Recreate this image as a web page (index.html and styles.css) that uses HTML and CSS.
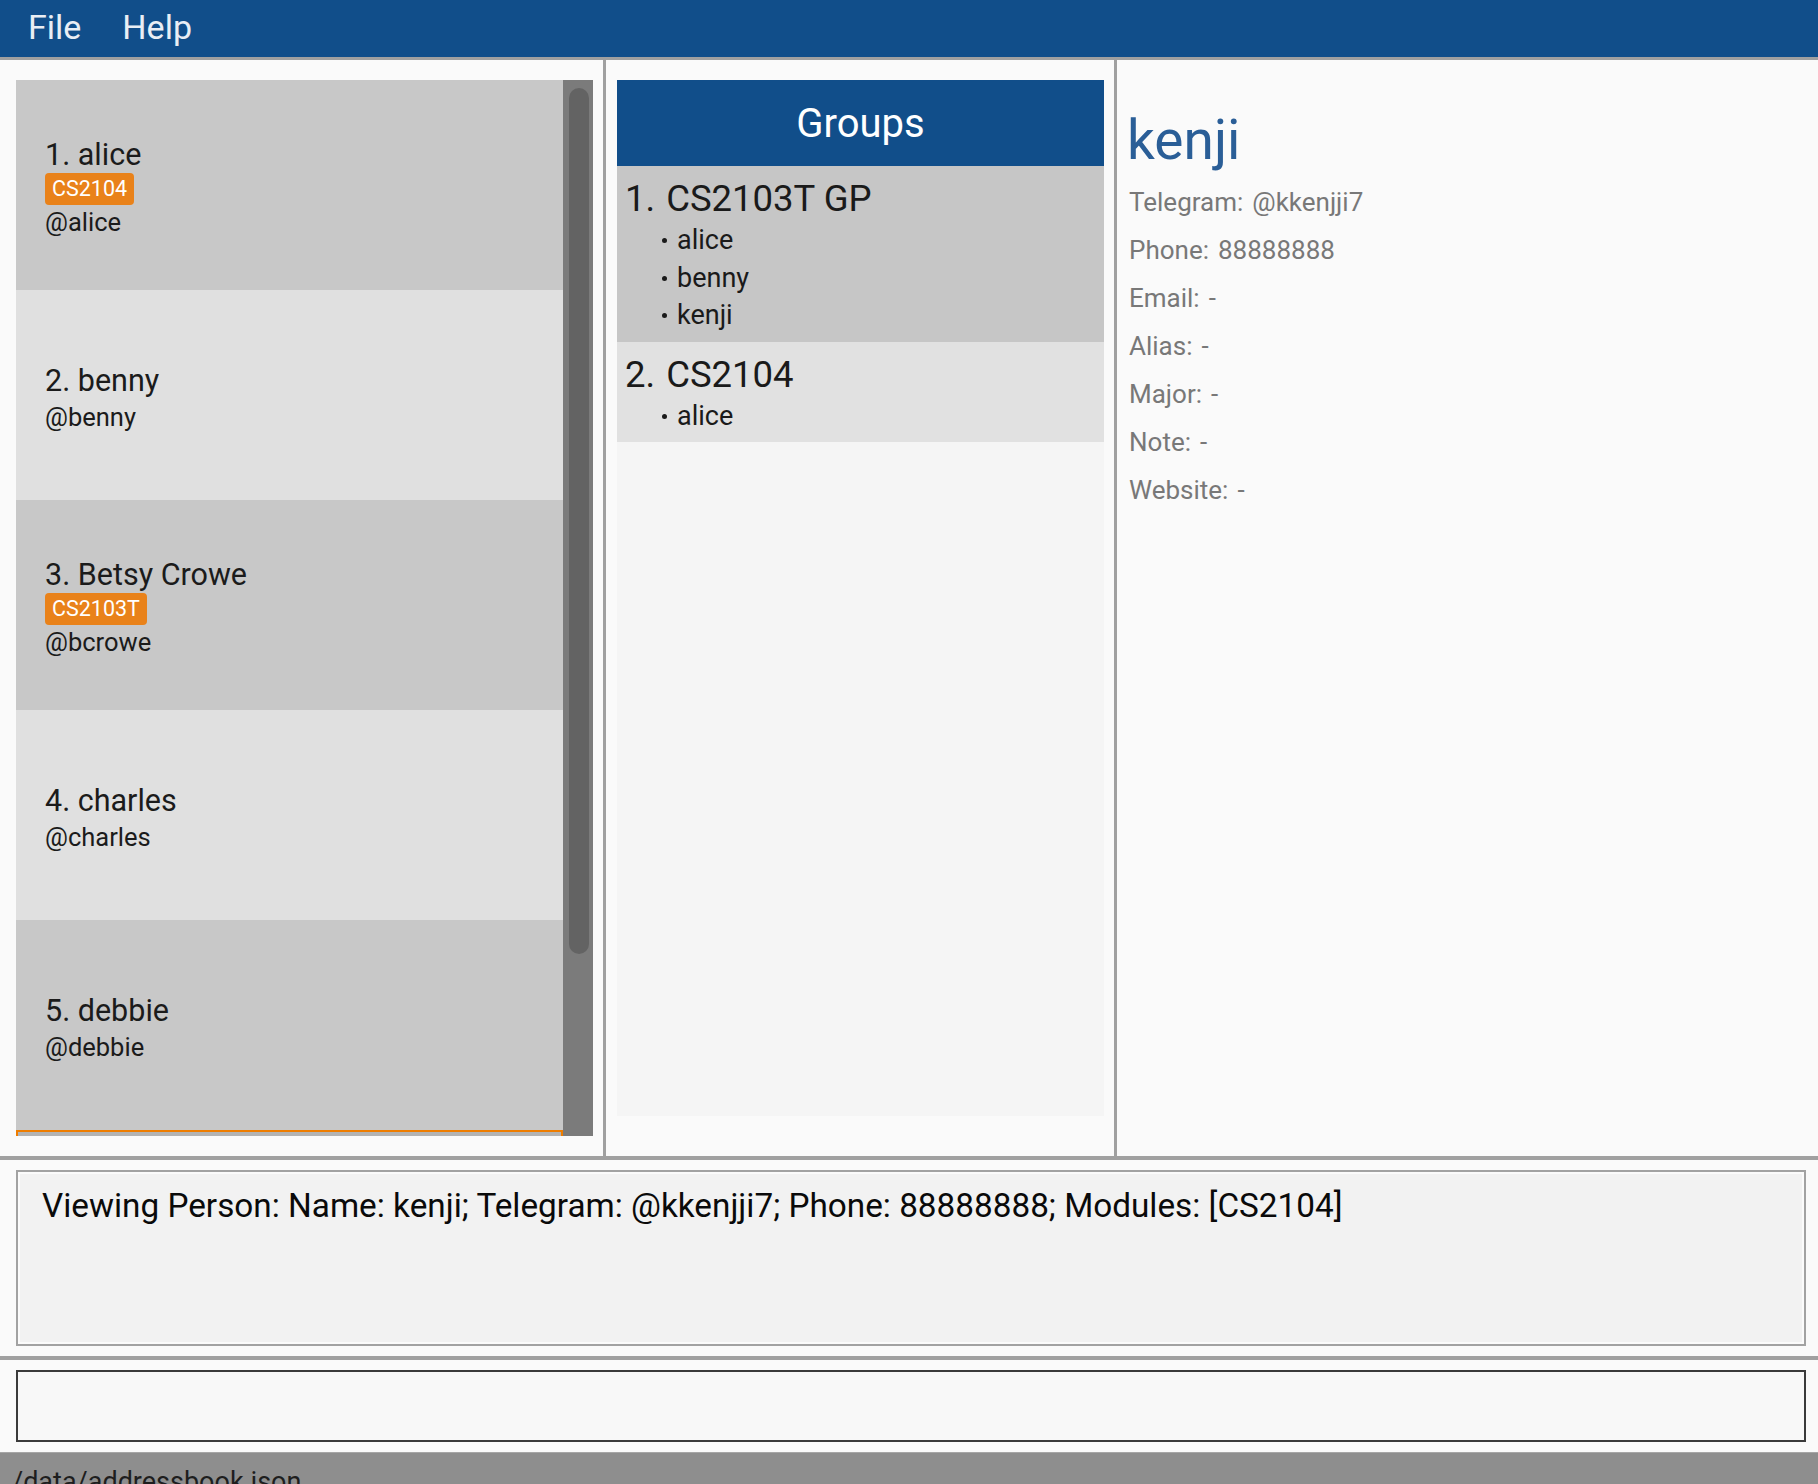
FILE: index.html
```html
<!DOCTYPE html>
<html lang="en">
<head>
<meta charset="utf-8">
<title>Address Book</title>
<link rel="stylesheet" href="styles.css">
</head>
<body>
<div class="app">
  <header class="menubar">
    <span class="menu-item">File</span>
    <span class="menu-item">Help</span>
  </header>

  <main class="main">
    <section class="panel panel-left">
      <div class="list-view">
        <div class="cards">
          <div class="card card-odd">
            <div class="card-name">1. alice</div>
            <div class="tags"><span class="tag">CS2104</span></div>
            <div class="card-handle tight">@alice</div>
          </div>
          <div class="card card-even">
            <div class="card-name">2. benny</div>
            <div class="card-handle">@benny</div>
          </div>
          <div class="card card-odd">
            <div class="card-name">3. Betsy Crowe</div>
            <div class="tags"><span class="tag">CS2103T</span></div>
            <div class="card-handle tight">@bcrowe</div>
          </div>
          <div class="card card-even">
            <div class="card-name">4. charles</div>
            <div class="card-handle">@charles</div>
          </div>
          <div class="card card-odd">
            <div class="card-name">5. debbie</div>
            <div class="card-handle">@debbie</div>
          </div>
          <div class="card card-selected"></div>
        </div>
        <div class="scrollbar">
          <div class="scroll-thumb"></div>
        </div>
      </div>
    </section>

    <section class="panel panel-middle">
      <div class="groups">
        <div class="groups-header">Groups</div>
        <div class="group group-odd">
          <div class="group-title"><span class="group-num">1.</span>CS2103T GP</div>
          <ul class="members">
            <li>alice</li>
            <li>benny</li>
            <li>kenji</li>
          </ul>
        </div>
        <div class="group group-even">
          <div class="group-title"><span class="group-num">2.</span>CS2104</div>
          <ul class="members">
            <li>alice</li>
          </ul>
        </div>
      </div>
    </section>

    <section class="panel panel-right">
      <div class="detail-name">kenji</div>
      <div class="detail-row"><span>Telegram:</span><span class="val">@kkenjji7</span></div>
      <div class="detail-row"><span>Phone:</span><span class="val">88888888</span></div>
      <div class="detail-row"><span>Email:</span><span class="val">-</span></div>
      <div class="detail-row"><span>Alias:</span><span class="val">-</span></div>
      <div class="detail-row"><span>Major:</span><span class="val">-</span></div>
      <div class="detail-row"><span>Note:</span><span class="val">-</span></div>
      <div class="detail-row"><span>Website:</span><span class="val">-</span></div>
    </section>
  </main>

  <section class="result-area">
    <div class="result-box">Viewing Person: Name: kenji; Telegram: @kkenjji7; Phone: 88888888; Modules: [CS2104]</div>
  </section>

  <section class="command-area">
    <div class="command-box"></div>
  </section>

  <footer class="statusbar">/data/addressbook.json</footer>
</div>
</body>
</html>
```

FILE: styles.css
```css
* {
  box-sizing: border-box;
}

html, body {
  margin: 0;
  padding: 0;
}

body {
  width: 1818px;
  height: 1484px;
  overflow: hidden;
  background: #fafafa;
  font-family: Roboto, "Liberation Sans", Arial, sans-serif;
  color: #1c1c1c;
}

.app {
  display: flex;
  flex-direction: column;
  height: 1484px;
}

/* Menu bar */
.menubar {
  height: 60px;
  flex: none;
  background: #114e8a;
  border-bottom: 3px solid #a0a0a0;
  display: flex;
  gap: 41px;
  padding-left: 28px;
}

.menu-item {
  font-size: 34px;
  line-height: 54px;
  color: #e9eef5;
}

/* Main three-panel area */
.main {
  display: flex;
  height: 1096px;
  flex: none;
}

.panel-left {
  width: 606px;
  flex: none;
  border-right: 3px solid #a0a0a0;
  padding: 20px 10px 20px 16px;
}

.list-view {
  display: flex;
  height: 1056px;
  overflow: hidden;
}

.cards {
  width: 547px;
  flex: none;
  overflow: hidden;
}

.card {
  height: 210px;
  display: flex;
  flex-direction: column;
  justify-content: center;
  padding: 5px 0 0 29px;
}

.card-odd {
  background: #c8c8c8;
}

.card-even {
  background: #e0e0e0;
}

.card-selected {
  background: #b3b3b3;
  border: 2px solid #ee7d00;
}

.card-name {
  font-size: 30.5px;
  line-height: 34px;
  color: #1b1b1b;
}

.tags {
  display: flex;
  margin-top: 1px;
}

.tag {
  background: #e9821a;
  color: #ffffff;
  font-size: 21.5px;
  line-height: 32px;
  padding: 0 7px;
  border-radius: 4px;
}

.card-handle {
  font-size: 25.5px;
  line-height: 30px;
  margin-top: 4px;
  color: #1b1b1b;
}

.card-handle.tight {
  margin-top: 2px;
}

.scrollbar {
  width: 30px;
  flex: none;
  background: #7b7b7b;
  padding: 8px 4px 0 6px;
}

.scroll-thumb {
  height: 866px;
  background: #636363;
  border-radius: 10px;
}

/* Middle: groups */
.panel-middle {
  width: 511px;
  flex: none;
  border-right: 3px solid #a0a0a0;
  padding: 20px 10px 40px 11px;
}

.groups {
  height: 100%;
  background: #f5f5f5;
}

.groups-header {
  height: 86px;
  background: #114e8a;
  color: #ffffff;
  font-size: 40px;
  display: flex;
  align-items: center;
  justify-content: center;
}

.group {
  padding: 12px 0 7px 8px;
}

.group-odd {
  background: #c6c6c6;
}

.group-even {
  background: #e1e1e1;
}

.group-title {
  font-size: 36.5px;
  line-height: 42px;
  color: #1a1a1a;
}

.group-num {
  margin-right: 11px;
}

.members {
  list-style: none;
  margin: 2px 0 0 0;
  padding: 0;
}

.members li {
  font-size: 27px;
  line-height: 37.5px;
  color: #1a1a1a;
}

.members li::before {
  content: "";
  display: inline-block;
  width: 5px;
  height: 5px;
  border-radius: 50%;
  background: #1a1a1a;
  margin: 0 10px 0 37px;
  vertical-align: 6px;
}

/* Right: details */
.panel-right {
  flex: 1;
  padding: 47.5px 0 0 10px;
}

.detail-name {
  font-size: 55px;
  line-height: 64px;
  color: #2a5e97;
  margin-bottom: 6px;
}

.detail-row {
  font-size: 26px;
  line-height: 48px;
  color: #787878;
  padding-left: 2px;
}

.detail-row .val {
  margin-left: 9px;
}

/* Result display */
.result-area {
  height: 200px;
  flex: none;
  border-top: 4px solid #a0a0a0;
  padding: 10px 12px 10px 16px;
}

.result-box {
  height: 176px;
  background: #f2f2f2;
  border: 2px solid #a2a2a2;
  box-shadow: inset 0 0 0 2px #fbfbfb;
  padding: 14px 24px;
  font-size: 33.3px;
  line-height: 39px;
  color: #0a0a0a;
}

/* Command box */
.command-area {
  height: 96px;
  flex: none;
  border-top: 4px solid #a0a0a0;
  padding: 10px 12px 10px 16px;
}

.command-box {
  height: 72px;
  background: #f8f8f8;
  border: 2px solid #3b3b3b;
}

/* Status bar */
.statusbar {
  height: 32px;
  flex: none;
  overflow: hidden;
  background: #8e8e8e;
  border-top: 1px solid #a6a6a6;
  padding: 14px 0 0 12px;
  font-size: 27px;
  line-height: 30px;
  color: #1e1e1e;
}
```
